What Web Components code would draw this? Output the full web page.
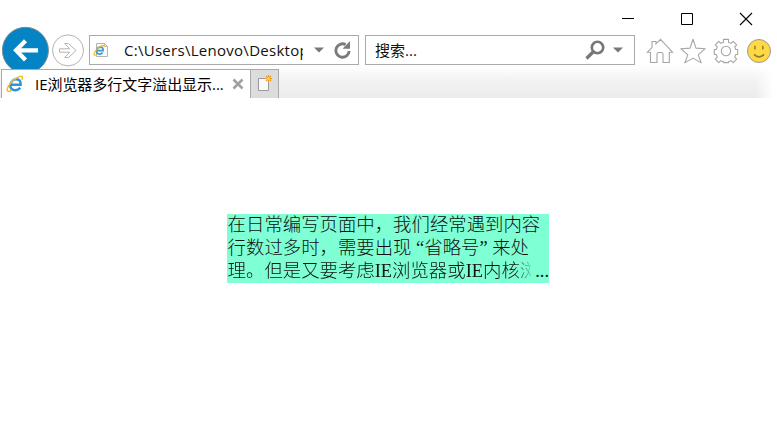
<!DOCTYPE html>
<html lang="zh-CN">
<head>
<meta charset="utf-8">
<title>IE浏览器多行文字溢出显示...</title>
<style>
html,body{margin:0;height:100%;background:#fff;overflow:hidden}
</style>
</head>
<body>
<browser-window></browser-window>
<script>
const define = (name, html) => {
  const t = document.createElement('template');
  t.innerHTML = html;
  customElements.define(name, class extends HTMLElement {
    constructor() {
      super();
      this.attachShadow({mode: 'open'}).appendChild(t.content.cloneNode(true));
    }
  });
};

define('ie-logo', `<style>:host{display:block;width:18px;height:18px}svg{display:block;width:100%;height:100%}</style>
<svg viewBox="0 0 18 18" fill="none">
<path d="M14.2 12.6C12.8 14.6 10.8 15.4 8.6 15.2 5.6 15 4 12.8 4.4 9.8 4.8 6.6 7.2 4.2 10.2 4.2c3.2 0 4.8 2.2 4.4 5.6H5" stroke="#2f93d6" stroke-width="2.5"/>
<path d="M3.8 8.6C4.6 5.4 7 3.3 10 3.2" stroke="#8fd6f7" stroke-width="1"/>
<path d="M15.8 4.8C17.2 2 16.4.6 14 1.4 10.4 2.6 5.2 6.8 2.6 10.9.4 14.4.8 17.2 3.6 16.2 4.4 15.9 5 15.6 5.6 15.1" stroke="#f4bd22" stroke-width="1.5"/>
</svg>`);

define('title-bar', `<style>:host{display:flex;justify-content:flex-end;height:35px;box-sizing:border-box;padding:12px 24px 0 0;gap:45px}svg{display:block;width:14px;height:14px}svg:first-child{margin-right:-1px;position:relative}</style>
<svg viewBox="0 0 14 14"><path d="M1 6.5h12" stroke="#000"/></svg>
<svg viewBox="0 0 14 14"><path d="M1.5 1.5h11v11h-11z" fill="none" stroke="#000"/></svg>
<svg viewBox="0 0 14 14"><path d="M1 1l12 12M13 1L1 13" stroke="#000" stroke-width="1.1"/></svg>`);

define('nav-buttons', `<style>:host{display:block;width:89px;height:34px}svg{display:block;overflow:visible}</style>
<svg width="89" height="34" viewBox="0 35 89 34">
<circle cx="25.4" cy="50.3" r="23" fill="#0584c5" stroke="#7d898f" stroke-width="1"/>
<path d="M38 50.3H17M25.5 40.7l-9.4 9.6 9.4 9.6" fill="none" stroke="#fff" stroke-width="4.3"/>
<circle cx="68" cy="50.4" r="15.5" fill="#fff" stroke="#b4b4b4"/>
<path d="M59.5 48.8h10.2l-5-5.3h3.7l7.8 7-7.8 7h-3.7l5-5.3H59.5z" fill="none" stroke="#b4b4b4"/>
</svg>`);

define('address-bar', `<style>
:host{display:flex;box-sizing:border-box;width:270px;height:30px;border:1px solid #aaa;background:#fff;align-items:center;padding-left:3px}
.page{display:block;width:16px;height:16px}
.url{width:179px;margin-left:15px;overflow:hidden;white-space:nowrap;font:15px/28px "Open Sans","Noto Sans",sans-serif;letter-spacing:.28px;color:#111}
.drop{margin-left:11px}.reload{margin-left:9px}</style>
<svg class="page" viewBox="0 0 16 16"><path d="M3.5 1.5h8l3 3v10h-11z" fill="#fafafa" stroke="#b4b4b4"/><path d="M11.5 1.5v3h3" fill="none" stroke="#bbb"/><path d="M9.6 10.4C8.7 11.7 7.6 12.2 6.3 12.1 4.3 12 3.3 10.6 3.6 8.6 3.9 6.6 5.4 5.1 7.3 5.1c2.1 0 3 1.4 2.8 3.6H4" fill="none" stroke="#3c9ad8" stroke-width="1.8"/><path d="M10.8 5C11.8 2.8 9.3 3 6.2 5.2 2.6 7.9.2 12 1.3 13c.5.5 1.5.1 2.4-.4" fill="none" stroke="#f2b91e" stroke-width="1.2"/></svg>
<div class="url">C:\\Users\\Lenovo\\Desktop</div>
<svg class="drop" width="10" height="6" viewBox="0 0 10 6"><path d="M0 .5h10L5 5.5z" fill="#777"/></svg>
<svg class="reload" width="20" height="20" viewBox="0 0 20 20"><path d="M12.6 4.6A6.7 6.7 0 1 0 16.2 11" fill="none" stroke="#7b7b7b" stroke-width="2.9"/><path d="M17 1v7.8H9.6z" fill="#7b7b7b"/></svg>`);

define('search-box', `<style>
:host{display:flex;box-sizing:border-box;width:270px;height:30px;margin-left:6px;border:1px solid #aaa;background:#fff;align-items:center;padding:0 11px 0 9px}
span{flex:1;font:15px/28px "Open Sans","Noto Sans CJK SC",sans-serif;color:#111}.drop{margin-left:8px}</style>
<span>搜索...</span>
<svg width="20" height="20" viewBox="0 0 20 20"><circle cx="12.5" cy="7.5" r="5.7" fill="none" stroke="#777" stroke-width="2.6"/><path d="M8.5 11.5L1.5 18.5" stroke="#777" stroke-width="3.2"/></svg>
<svg class="drop" width="10" height="6" viewBox="0 0 10 6"><path d="M0 .5h10L5 5.5z" fill="#777"/></svg>`);

define('tool-icons', `<style>:host{display:flex;margin-left:11px;height:32px;align-items:center;gap:5px}svg{display:block;width:28px;height:28px}</style>
<svg viewBox="0 0 28 28" fill="none" stroke="#a5a5a5" stroke-width="1.1"><path d="M4.5 15.2V25.5H11V17q0-1.5 1.5-1.5h3q1.5 0 1.5 1.5v8.5h6.3V15.2h3.2L14.5 2.4 10 6.8V4.5H6v6.1L1.3 15.2z"/></svg>
<svg viewBox="0 0 28 28" fill="none" stroke="#a5a5a5" stroke-width="1.1"><path d="M14 2.3l3 8.8 9.2.6-7 6.2 3 8-8.2-4.8-8.2 4.8 3-8-7-6.2 9.2-.6z" stroke-linejoin="round"/></svg>
<svg viewBox="0 0 28 28" fill="none" stroke="#a5a5a5" stroke-width="1.1"><circle cx="14" cy="14" r="4.7"/><path stroke-linejoin="round" d="M11.5 2.4h5v2.8l2.6 1.1 2.1-2 3.5 3.5-2 2.1 1.1 2.6h1.9v5h-1.9l-1.1 2.6 2 2.1-3.5 3.5-2.1-2-2.6 1.1v.8h-5v-.8l-2.6-1.1-2.1 2-3.5-3.5 2-2.1-1.1-2.6H2.3v-5h1.9l1.1-2.6-2-2.1 3.5-3.5 2.1 2 2.6-1.1z"/></svg>
<svg viewBox="0 0 28 28"><circle cx="14" cy="14" r="11.5" fill="#ffd941" stroke="#999"/><path d="M10 8.8v3.8M17.8 8.8v3.8" stroke="#8c7b38" stroke-width="1.5"/><path d="M9 17.3q5 5 10 0" fill="none" stroke="#8c7b38" stroke-width="1.7"/></svg>`);

define('nav-row', `<style>:host{display:flex;height:34px;align-items:flex-start}</style>
<nav-buttons></nav-buttons><address-bar></address-bar><search-box></search-box><tool-icons></tool-icons>`);

define('tab-strip', `<style>
:host{display:flex;position:relative;height:29px}
.tab{display:flex;box-sizing:border-box;width:249px;margin-left:1px;height:29px;border:1px solid #aaa;border-width:1px 0 0 1px;background:#fff;align-items:center;padding-left:4px}
.name{margin-left:11px;width:192px;white-space:nowrap;font:15px/28px "Open Sans","Noto Sans CJK SC",sans-serif;color:#000;letter-spacing:-.04px}
.close{margin-left:5px}
.new{box-sizing:border-box;width:29px;height:29px;border:1px solid #aaa;border-bottom:0;background:#dcdcdc;padding:4px 0 0 6px}
.new svg{display:block}</style>
<div class="tab"><ie-logo></ie-logo><span class="name"><slot></slot></span>
<svg class="close" width="12" height="12" viewBox="0 0 12 12"><path d="M1.5 1.5l9 9M10.5 1.5l-9 9" stroke="#a0a0a0" stroke-width="2.6"/></svg></div>
<div class="new"><svg width="18" height="20" viewBox="0 0 18 20"><path d="M1.5 4.5h10v12h-10z" fill="#fafafa" stroke="#999"/><path d="M11.5 1v7M8 4.5h7M9 2l5 5M14 2L9 7" stroke="#e9981b" stroke-width="1.1"/><circle cx="11.5" cy="4.5" r="1.6" fill="#ffd34b"/></svg></div>`);

define('browser-chrome', `<style>
:host{display:block;height:98px;background:linear-gradient(90deg,transparent 755px,#fff 773px),linear-gradient(#fff 64px,#fcfcfc 69px,#f3f3f3 80px,#ebebeb 98px)}</style>
<title-bar></title-bar><nav-row></nav-row><tab-strip>IE浏览器多行文字溢出显示...</tab-strip>`);

define('clamped-text', `<style>
:host{display:block;box-sizing:border-box;width:322px;height:69px;margin:116px 0 0 227px;padding-left:.6px;overflow:hidden;background:#7fffd4;color:#111;font:300 18.4px/23px "Liberation Serif","Noto Sans CJK SC",serif}
div{white-space:nowrap}
.last{display:flex;justify-content:space-between}
.cut{width:303px;overflow:hidden;-webkit-mask-image:linear-gradient(90deg,#000 286px,transparent 306px);mask-image:linear-gradient(90deg,#000 286px,transparent 306px)}
</style>
<div>在日常编写页面中，我们经常遇到内容</div>
<div>行数过多时，需要出现 “省略号” 来处</div>
<div class="last"><span class="cut">理。但是又要考虑IE浏览器或IE内核浏</span><span>...</span></div>`);

define('browser-window', `<style>:host{display:block;width:777px;height:433px;overflow:hidden;background:#fff}</style>
<browser-chrome></browser-chrome><clamped-text></clamped-text>`);
</script>
</body>
</html>
